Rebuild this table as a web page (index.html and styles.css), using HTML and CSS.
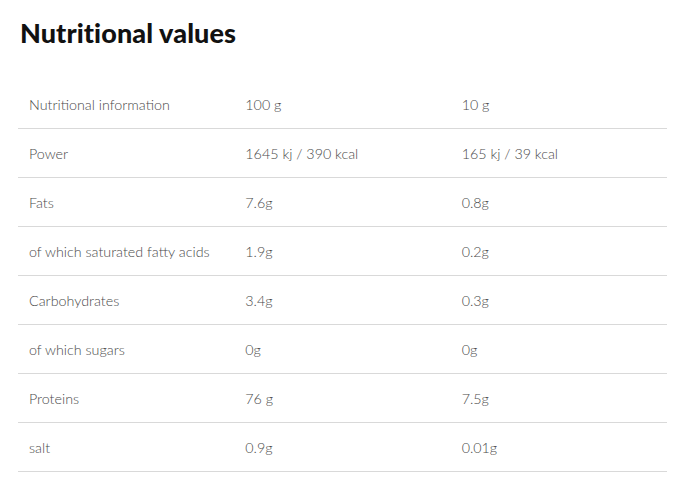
FILE: index.html
```html
<!DOCTYPE html>
<html>
<head>
<meta charset="utf-8">
<link rel="stylesheet" href="styles.css">
</head>
<body>
<div class="page">
  <h1 class="title">Nutritional values</h1>
  <table class="nutri">
    <tr><td>Nutritional information</td><td>100 g</td><td>10 g</td></tr>
    <tr><td>Power</td><td>1645 kj / 390 kcal</td><td>165 kj / 39 kcal</td></tr>
    <tr><td>Fats</td><td>7.6g</td><td>0.8g</td></tr>
    <tr><td>of which saturated fatty acids</td><td>1.9g</td><td>0.2g</td></tr>
    <tr><td>Carbohydrates</td><td>3.4g</td><td>0.3g</td></tr>
    <tr><td>of which sugars</td><td>0g</td><td>0g</td></tr>
    <tr><td>Proteins</td><td>76 g</td><td>7.5g</td></tr>
    <tr><td>salt</td><td>0.9g</td><td>0.01g</td></tr>
  </table>
</div>
</body>
</html>
```
FILE: styles.css
```css
html, body {
  margin: 0;
  padding: 0;
  background: #fff;
}
.page {
  padding: 18px 17px 0 18px;
  font-family: "Lato", "Open Sans", sans-serif;
}
.title {
  margin: 0 0 0 2px;
  font-family: "Lato", sans-serif;
  font-weight: 900;
  font-size: 27px;
  line-height: 30px;
  color: #111;
  letter-spacing: 0.1px;
}
.nutri {
  margin-top: 32px;
  width: 649px;
  border-collapse: collapse;
  table-layout: fixed;
}
.nutri td {
  height: 48px;
  padding: 0 0 0 11px;
  border-bottom: 1px solid #d9d9d9;
  font-size: 14.3px;
  font-weight: 300;
  color: #4a4a4a;
  vertical-align: middle;
}
```
